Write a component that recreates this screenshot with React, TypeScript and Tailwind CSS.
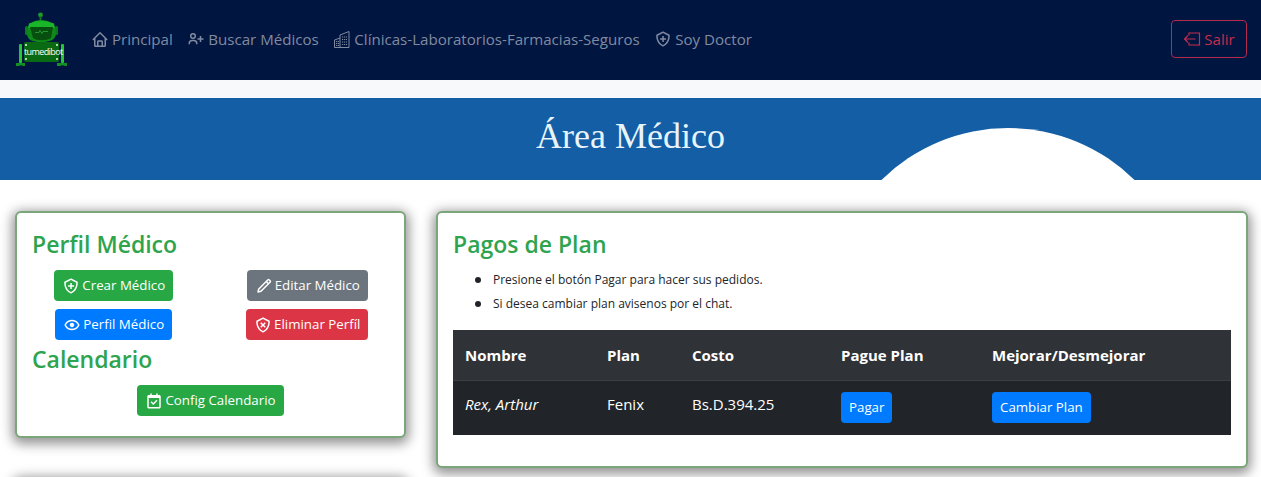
import type { ReactNode } from "react";
import {
  BiCalendarCheck,
  BiHome,
  BiPencil,
  BiShieldPlus,
  BiShieldX,
  BiShow,
  BiUserPlus,
} from "react-icons/bi";

function Logo() {
  return (
    <div className="relative w-[54px] h-[56px] shrink-0">
      <svg viewBox="0 0 54 56" className="w-full h-full">
        <circle cx="25.5" cy="3" r="2.4" fill="#1f9a2a" />
        <rect x="24.5" y="4" width="2" height="5" fill="#14781d" />
        <rect x="10" y="14" width="3" height="9" rx="1.5" fill="#0d7a19" />
        <rect x="40" y="14" width="3" height="9" rx="1.5" fill="#0d7a19" />
        <path d="M12 21 C12 12 18 8 26 8 C34 8 41 12 41 21 C41 28 35 30 26 30 C17 30 12 28 12 21Z" fill="#0e8a1b" />
        <path d="M14 11.5 Q26 6 39 11.5 L40 16 H13Z" fill="#19b62a" />
        <path d="M15 15 H38 L36 26 C31 29 22 29 18 26Z" fill="#064f0e" />
        <path d="M20 20.5 h4 l1 -2 l2 3 l1 -2 h5" stroke="#37c647" strokeWidth="0.6" fill="none" />
        <rect x="9" y="30" width="35" height="20" rx="2" fill="#0a6a14" />
        <rect x="4" y="32" width="3" height="19" rx="1" fill="#25c734" />
        <rect x="46" y="32" width="3" height="19" rx="1" fill="#25c734" />
        <path d="M1 51 H10 V54 H8 Q6 52.5 4 54 H1Z" fill="#149124" />
        <path d="M42 51 H52 V54 H50 Q47.5 52.5 45 54 H42Z" fill="#149124" />
        <circle cx="11" cy="33" r="1" fill="#e9ffe9" />
        <circle cx="42" cy="33" r="1" fill="#e9ffe9" />
        <circle cx="11" cy="47" r="1" fill="#e9ffe9" />
        <circle cx="42" cy="47" r="1" fill="#e9ffe9" />
      </svg>
      <span className="absolute left-[9px] top-[34px] text-[9px] leading-[12px] tracking-[-0.6px] text-white">
        tumedibot
      </span>
    </div>
  );
}

function BuildingIcon() {
  return (
    <svg viewBox="0 0 16 17" className="w-[16px] h-[17px]" fill="none" stroke="currentColor" strokeWidth="1">
      <path d="M0.5 16.5 V9 L6 7 V4 L15 0.5 V16.5 Z" />
      <path d="M6 7 V16.5" />
      <path d="M8 6 H13 M8 8.5 H13 M8 11 H13 M8 13.5 H13" strokeDasharray="1.2 0.8" />
      <path d="M2 10.5 H5 M2 12.5 H5 M2 14.5 H5" strokeDasharray="1.2 0.6" />
    </svg>
  );
}

function ExitIcon() {
  return (
    <svg viewBox="0 0 18 14" className="w-[18px] h-[14px]" fill="none" stroke="currentColor" strokeWidth="1.2">
      <path d="M6 3.5 V1 H16.5 V13 H6 V10.5" />
      <path d="M12.5 7 H1.5 M5 3.5 L1.5 7 L5 10.5" />
    </svg>
  );
}

function NavLink({ icon, label }: { icon: ReactNode; label: string }) {
  return (
    <a className="flex items-center gap-[3px] text-[#808ba1] text-[15.1px] leading-6 whitespace-nowrap">
      <span className="text-[18px] w-[18px] flex justify-center">{icon}</span>
      {label}
    </a>
  );
}

function Btn({
  color,
  icon,
  label,
}: {
  color: string;
  icon?: ReactNode;
  label: string;
}) {
  return (
    <button
      className={`${color} inline-flex items-center justify-center gap-[2px] h-[31px] px-[8px] rounded-[4px] text-white text-[13.3px] whitespace-nowrap`}
    >
      {icon && <span className="text-[18px]">{icon}</span>}
      {label}
    </button>
  );
}

function Card({ children, className }: { children?: ReactNode; className?: string }) {
  return (
    <div
      className={`bg-white rounded-[6px] border-2 border-[#7aa67a] shadow-[0_3px_12px_3px_rgba(0,0,0,0.42)] px-[15px] ${className ?? ""}`}
    >
      {children}
    </div>
  );
}

function Heading({ children }: { children: ReactNode }) {
  return <h2 className="text-[#2ea44f] text-[23px] leading-[29px] font-semibold">{children}</h2>;
}

export default function App() {
  return (
    <div className="h-[477px] overflow-hidden bg-white font-['Open_Sans',sans-serif]">
      <nav className="h-20 bg-[#001540] flex items-center pl-[15px] pr-[14px]">
        <Logo />
        <div className="flex items-center gap-[14.5px] ml-[22px] mb-[2px]">
          <NavLink icon={<BiHome className="text-[21px]" />} label="Principal" />
          <NavLink icon={<BiUserPlus className="text-[20px]" />} label="Buscar Médicos" />
          <NavLink icon={<BuildingIcon />} label="Clínicas-Laboratorios-Farmacias-Seguros" />
          <NavLink icon={<BiShieldPlus className="text-[20px]" />} label="Soy Doctor" />
        </div>
        <button className="ml-auto mb-[2px] flex items-center justify-center gap-[3px] w-[76px] h-[38px] rounded-[4px] border border-[#b32a4c] text-[#c72c4d] text-[15px]">
          <ExitIcon />
          Salir
        </button>
      </nav>

      <div className="h-[18px] bg-[#f8f9fa]" />

      <header className="relative h-[82px] overflow-hidden bg-[#135ea5] flex justify-center">
        <h1 className="relative z-10 font-['Liberation_Serif',serif] text-[36px] leading-[76px] text-[#e8f4fb]">
          Área Médico
        </h1>
        <div className="absolute left-[828px] top-[30px] w-[360px] h-[360px] rounded-full bg-white" />
      </header>

      <main className="flex gap-[30px] px-[15px] pt-[31px]">
        <div className="w-[391px] shrink-0">
          <Card className="h-[227px] pt-[17px]">
            <Heading>Perfil Médico</Heading>
            <div className="grid grid-cols-2 -mx-[15px] mt-[11px] gap-y-[8px] justify-items-center">
              <Btn color="bg-[#28a745]" icon={<BiShieldPlus />} label="Crear Médico" />
              <Btn color="bg-[#6c757d]" icon={<BiPencil />} label="Editar Médico" />
              <Btn color="bg-[#007bff]" icon={<BiShow />} label="Perfil Médico" />
              <Btn color="bg-[#dc3545]" icon={<BiShieldX />} label="Eliminar Perfíl" />
            </div>
            <Heading>
              <span className="block mt-[5px]">Calendario</span>
            </Heading>
            <div className="flex justify-center mt-[11px]">
              <Btn color="bg-[#28a745]" icon={<BiCalendarCheck />} label="Config Calendario" />
            </div>
          </Card>
          <Card className="h-[100px] mt-[39px]" />
        </div>

        <Card className="w-[812px] h-[257px] pt-[17px]">
          <Heading>Pagos de Plan</Heading>
          <ul className="pl-[22px] mt-[11px] text-[12px] leading-[19px] text-[#212529]">
            <li className="flex items-center gap-[12px] mb-[5px]">
              <span className="w-[6px] h-[6px] rounded-full bg-[#212529]" />
              Presione el botón Pagar para hacer sus pedidos.
            </li>
            <li className="flex items-center gap-[12px]">
              <span className="w-[6px] h-[6px] rounded-full bg-[#212529]" />
              Si desea cambiar plan avisenos por el chat.
            </li>
          </ul>
          <table className="w-[778px] mt-[17px] table-fixed text-white text-[15px]">
            <thead>
              <tr className="h-[50px] bg-[#2f3237] text-left border-b border-[#3b3f44]">
                <th className="w-[142px] px-3 font-bold">Nombre</th>
                <th className="w-[85px] px-3 font-bold">Plan</th>
                <th className="w-[149px] px-3 font-bold">Costo</th>
                <th className="w-[151px] px-3 font-bold">Pague Plan</th>
                <th className="px-3 font-bold">Mejorar/Desmejorar</th>
              </tr>
            </thead>
            <tbody>
              <tr className="h-[55px] bg-[#212529]">
                <td className="px-3 pb-[8px] italic">Rex, Arthur</td>
                <td className="px-3 pb-[8px]">Fenix</td>
                <td className="px-3 pb-[8px]">Bs.D.394.25</td>
                <td className="px-3">
                  <Btn color="bg-[#007bff]" label="Pagar" />
                </td>
                <td className="px-3">
                  <Btn color="bg-[#007bff]" label="Cambiar Plan" />
                </td>
              </tr>
            </tbody>
          </table>
        </Card>
      </main>
    </div>
  );
}
